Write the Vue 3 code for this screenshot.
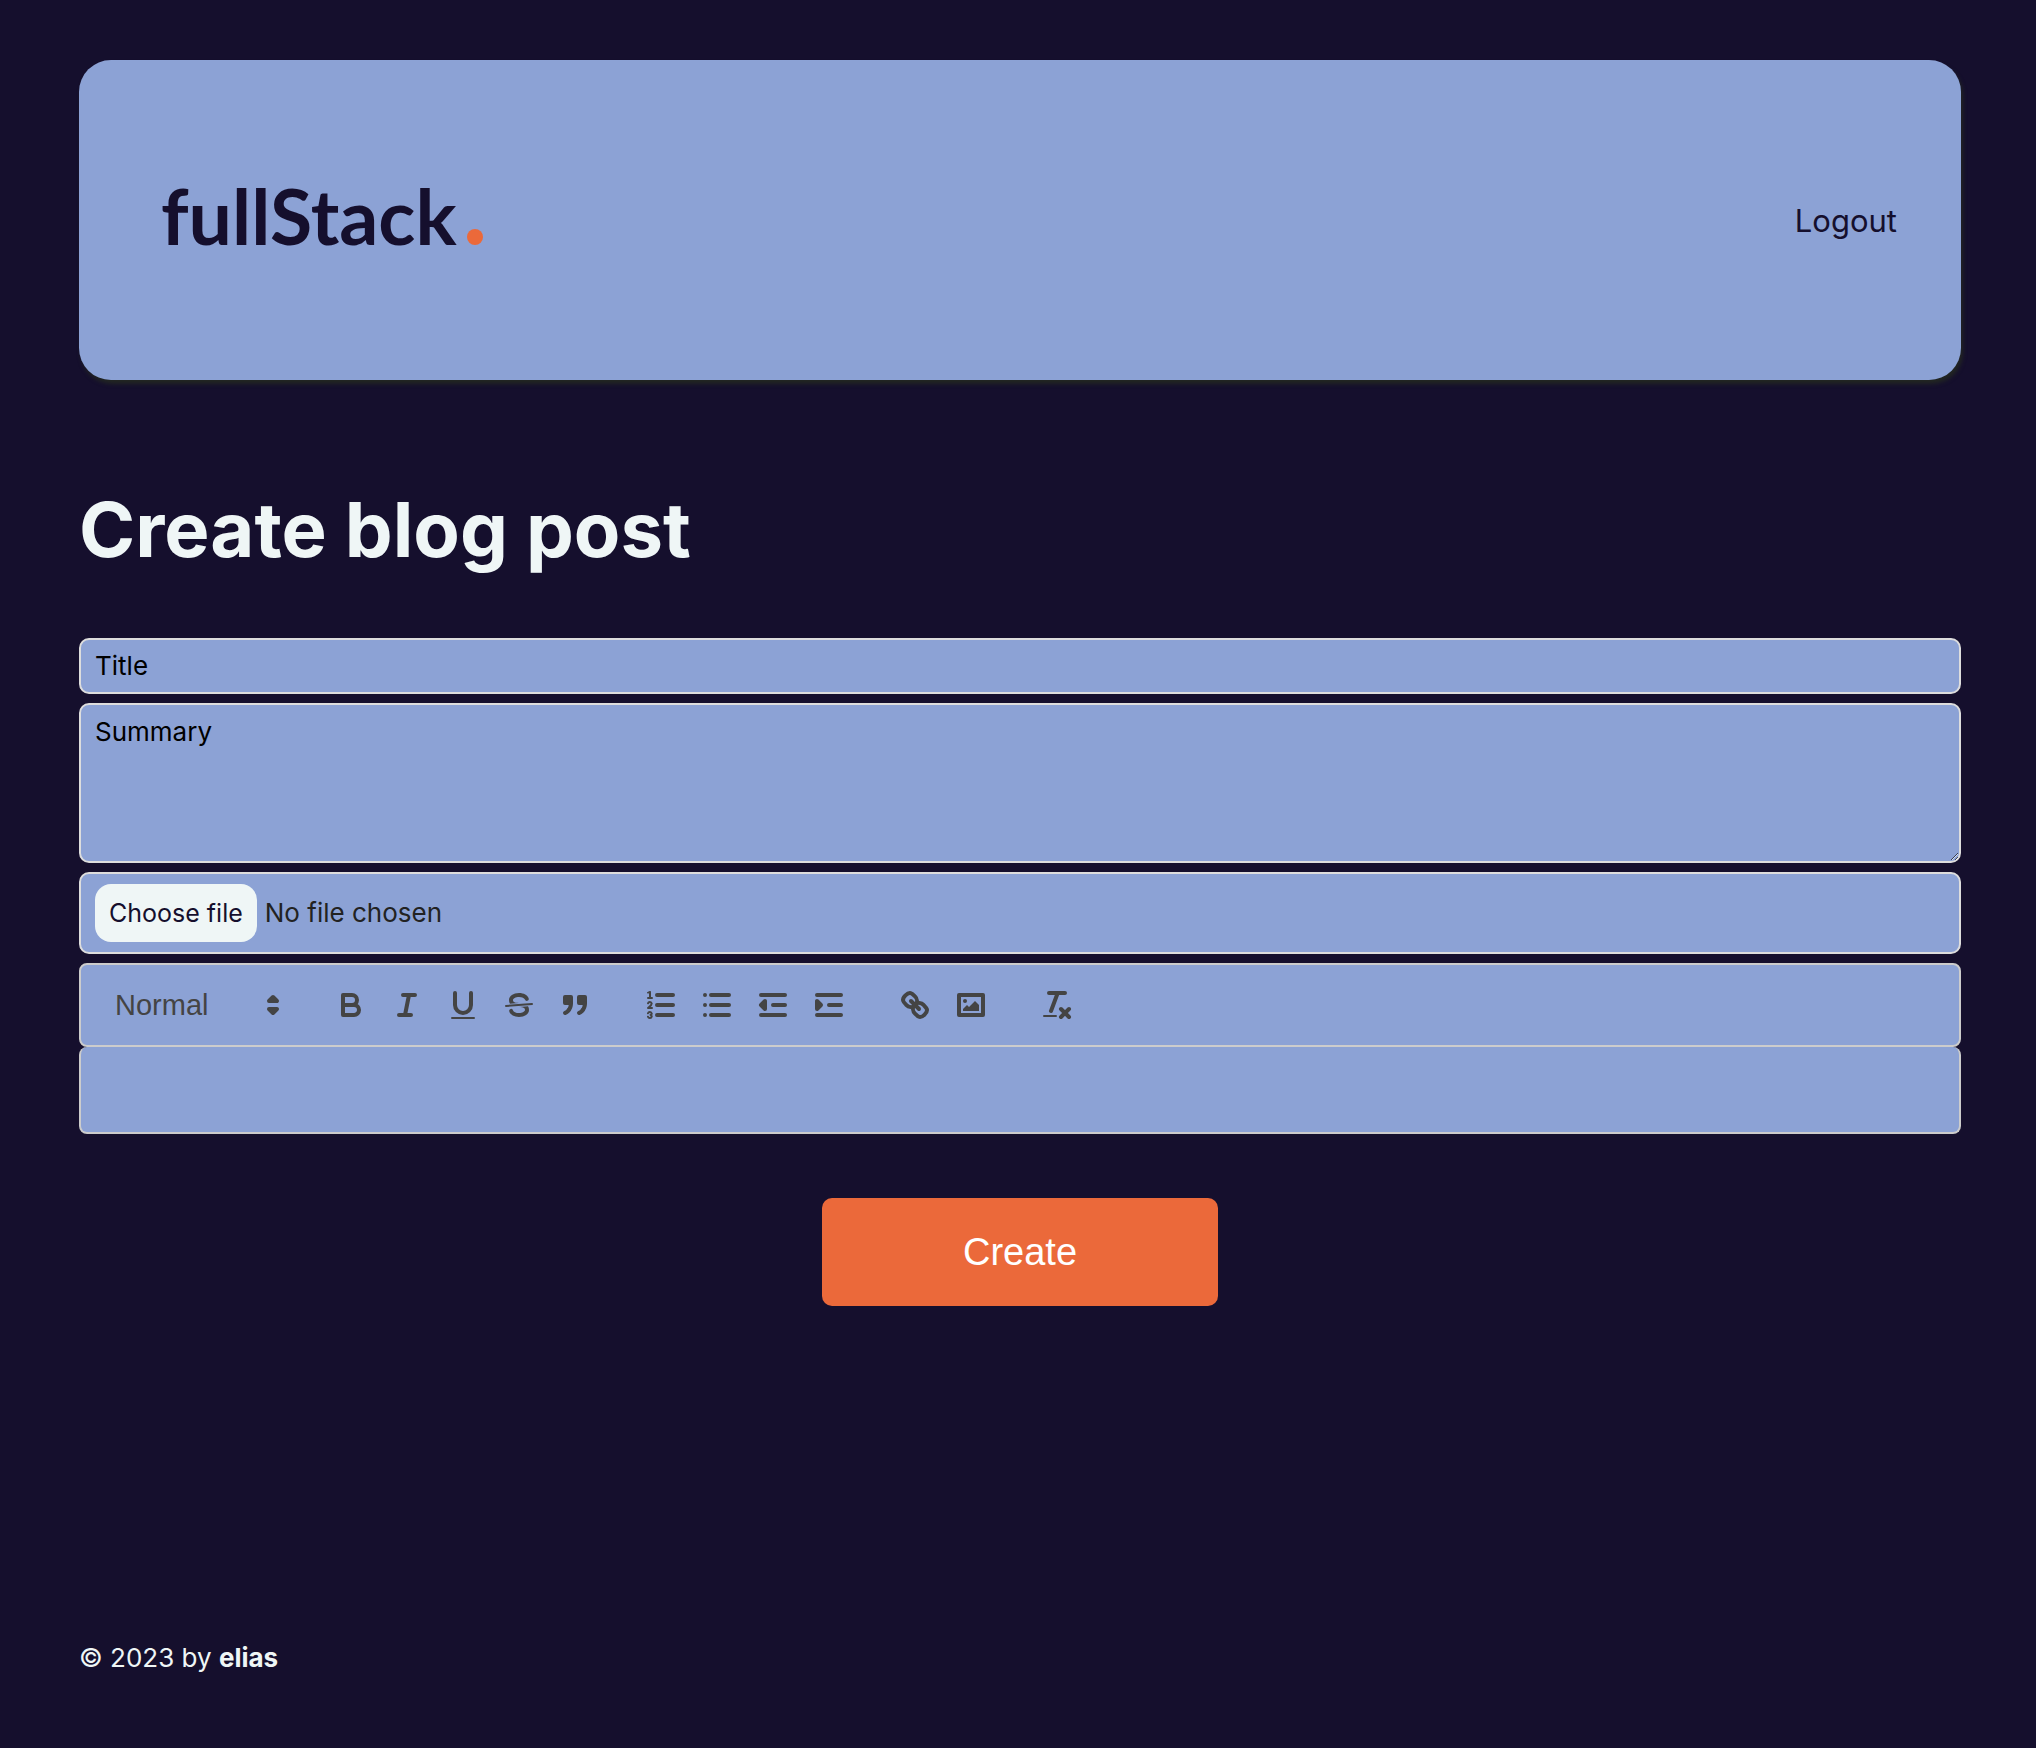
<script setup>
import { ref } from 'vue'

const title = ref('')
const summary = ref('')
const format = ref('normal')
const fileName = ref('')

const onFile = (event) => {
  fileName.value = event.target.files[0]?.name ?? ''
}

const groups = [
  [
    {
      name: 'Bold',
      svg: '<path class="s" d="M5,4H9.5A2.5,2.5,0,0,1,12,6.5v0A2.5,2.5,0,0,1,9.5,9H5V4Z"/><path class="s" d="M5,9h5.5A2.5,2.5,0,0,1,13,11.5v0A2.5,2.5,0,0,1,10.5,14H5V9Z"/>'
    },
    {
      name: 'Italic',
      svg: '<path class="s" d="M7,4H13M5,14H11M8,14L10,4"/>'
    },
    {
      name: 'Underline',
      svg: '<path class="s" d="M5,3V9a4.012,4.012,0,0,0,4,4H9a4.012,4.012,0,0,0,4-4V3"/><rect class="f" height="1" rx="0.5" ry="0.5" width="12" x="3" y="15"/>'
    },
    {
      name: 'Strike',
      svg: '<path class="s thin" d="M15.5,8.5L2.5,9.5"/><path class="f" d="M9.007,8C6.542,7.791,6,7.519,6,6.5,6,5.792,7.283,5,9,5c1.571,0,2.765.679,2.969,1.309a1,1,0,0,0,1.9-.617C13.356,4.106,11.354,3,9,3,6.2,3,4,4.538,4,6.5a3.2,3.2,0,0,0,.5,1.843Z"/><path class="f" d="M8.984,10C11.457,10.208,12,10.479,12,11.5c0,0.708-1.283,1.5-3,1.5-1.571,0-2.765-.679-2.969-1.309a1,1,0,1,0-1.9.617C4.644,13.894,6.646,15,9,15c2.8,0,5-1.538,5-3.5a3.2,3.2,0,0,0-.5-1.843Z"/>'
    },
    {
      name: 'Blockquote',
      svg: '<rect class="f s" height="3" width="3" x="4" y="5"/><rect class="f s" height="3" width="3" x="11" y="5"/><path class="f s" d="M7,8c0,4.031-3,5-3,5"/><path class="f s" d="M14,8c0,4.031-3,5-3,5"/>'
    }
  ],
  [
    {
      name: 'Ordered list',
      svg: '<path class="s" d="M7,4H15M7,9H15M7,14H15"/><path class="s thin" d="M2.5,5.5H4.5"/><path class="f" d="M3.5,6A0.5,0.5,0,0,1,3,5.5V3.085l-0.276.138A0.5,0.5,0,0,1,2.053,3c-0.124-.247-0.023-0.324.224-0.447l1-.5A0.5,0.5,0,0,1,4,2.5v3A0.5,0.5,0,0,1,3.5,6Z"/><path class="s thin" d="M4.5,10.5h-2c0-.234,1.85-1.076,1.85-2.234A0.959,0.959,0,0,0,2.5,8.156"/><path class="s thin" d="M2.5,14.846a0.959,0.959,0,0,0,1.85-.109A0.7,0.7,0,0,0,3.75,14a0.688,0.688,0,0,0,.6-0.736,0.959,0.959,0,0,0-1.85-.109"/>'
    },
    {
      name: 'Bullet list',
      svg: '<path class="s" d="M6,4H15M6,9H15M6,14H15M3,4H3M3,9H3M3,14H3"/>'
    },
    {
      name: 'Decrease indent',
      svg: '<path class="s" d="M3,14H15M3,4H15M9,9H15"/><path class="f s" d="M5,7V11L3,9Z"/>'
    },
    {
      name: 'Increase indent',
      svg: '<path class="s" d="M3,14H15M3,4H15M9,9H15"/><path class="f s" d="M3,7V11L5,9Z"/>'
    }
  ],
  [
    {
      name: 'Link',
      svg: '<path class="s" d="M7,7L11,11"/><path class="s" d="M8.9,4.577a3.476,3.476,0,0,1,.36,4.679A3.476,3.476,0,0,1,4.577,8.9C3.185,7.5,2.035,6.4,4.217,4.217S7.5,3.185,8.9,4.577Z"/><path class="s" d="M13.423,9.1a3.476,3.476,0,0,0-4.679-.36,3.476,3.476,0,0,0,.36,4.679c1.392,1.392,2.5,2.542,4.679.36S14.815,10.5,13.423,9.1Z"/>'
    },
    {
      name: 'Image',
      svg: '<rect class="s" height="10" width="12" x="3" y="4"/><circle class="f" cx="6" cy="7" r="1"/><path class="f" d="M5,12V11L7,9L8,10L11,7L13,9V12Z"/>'
    }
  ],
  [
    {
      name: 'Clear formatting',
      svg: '<path class="s" d="M5,3H13M6,12L9.35,3M11,11L15,15M15,11L11,15"/><rect class="f" height="1" rx="0.5" ry="0.5" width="7" x="2" y="14"/>'
    }
  ]
]
</script>

<template>
  <div class="page">
    <header class="banner">
      <a class="logo" href="#">fullStack<span class="dot"></span></a>
      <nav><a class="logout" href="#">Logout</a></nav>
    </header>

    <main>
      <h1>Create blog post</h1>
      <form class="form" @submit.prevent>
        <input v-model="title" class="field" type="text" placeholder="Title" aria-label="Title" />
        <textarea v-model="summary" class="field summary" placeholder="Summary" aria-label="Summary"></textarea>
        <div class="field file">
          <input id="cover" class="file-input" type="file" @change="onFile" />
          <label for="cover" class="file-button">Choose file</label>
          <span class="file-name">{{ fileName || 'No file chosen' }}</span>
        </div>
        <div class="editor">
          <div class="toolbar">
            <div class="picker">
              <select v-model="format" aria-label="Text style">
                <option value="1">Heading 1</option>
                <option value="2">Heading 2</option>
                <option value="normal">Normal</option>
              </select>
              <svg class="icon arrows" viewBox="0 0 18 18" aria-hidden="true">
                <path class="f s" d="M7,11L9,13L11,11Z" />
                <path class="f s" d="M7,7L9,5L11,7Z" />
              </svg>
            </div>
            <div v-for="(group, i) in groups" :key="i" class="group">
              <button v-for="tool in group" :key="tool.name" type="button" class="tool" :aria-label="tool.name">
                <svg class="icon" viewBox="0 0 18 18" aria-hidden="true" v-html="tool.svg"></svg>
              </button>
            </div>
          </div>
          <div class="content" contenteditable="true" role="textbox" aria-label="Post content"></div>
        </div>
        <button class="submit" type="submit">Create</button>
      </form>
    </main>

    <footer>© 2023 by <strong>elias</strong></footer>
  </div>
</template>

<style>
body {
  margin: 0;
  background: #150f2d;
}
</style>

<style scoped>
.page {
  box-sizing: border-box;
  min-height: 100vh;
  display: flex;
  flex-direction: column;
  padding: 60px 75px 72px 79px;
  background: #150f2d;
  color: #eff6f6;
  font-family: Inter, sans-serif;
  font-size: 26px;
  line-height: 36px;
}

.banner {
  display: flex;
  align-items: center;
  justify-content: space-between;
  padding: 107px 64px 117px 82px;
  border-radius: 32px;
  background: #8ca2d5;
  box-shadow: 2px 4px 4px #222622;
}

.logo {
  display: flex;
  align-items: baseline;
  gap: 10px;
  color: #150f2d;
  font-family: Lato, sans-serif;
  font-size: 77px;
  font-weight: 700;
  line-height: 96px;
  text-decoration: none;
}

.dot {
  width: 16px;
  height: 16px;
  border-radius: 50%;
  background: #eb693a;
}

nav {
  padding-top: 14px;
}

.logout {
  color: #150f2d;
  font-size: 31px;
  text-decoration: none;
}

h1 {
  margin: 100px 0 60px;
  font-size: 76px;
  font-weight: 700;
  line-height: 98px;
}

.form {
  display: flex;
  flex-direction: column;
  gap: 9px;
}

.field {
  box-sizing: border-box;
  width: 100%;
  margin: 0;
  padding: 8px 14px;
  border: 2px solid #ddd;
  border-radius: 10px;
  outline: none;
  background: #8ca2d5;
  color: #000;
  font: inherit;
}

.field::placeholder {
  color: #000;
  opacity: 1;
}

.summary {
  display: block;
  height: 160px;
  padding-top: 9px;
}

.file {
  display: flex;
  align-items: center;
  gap: 8px;
  padding: 10px 14px;
}

.file-input {
  position: absolute;
  width: 1px;
  height: 1px;
  opacity: 0;
}

.file-button {
  padding: 11px 14px;
  border-radius: 16px;
  background: #eff6f6;
  color: #150f2d;
  font-size: 25px;
}

.file-name {
  color: #222;
}

.toolbar {
  display: flex;
  flex-wrap: wrap;
  gap: 30px;
  padding: 16px;
  border: 2px solid #ccc;
  border-radius: 8px;
  background: #8ca2d5;
}

.picker {
  position: relative;
  width: 196px;
  height: 48px;
}

.picker select {
  width: 100%;
  height: 100%;
  margin: 0;
  padding: 0 18px;
  border: 0;
  appearance: none;
  background: transparent;
  color: #444;
  font-family: "Liberation Sans", sans-serif;
  font-size: 29px;
  font-weight: 500;
}

.arrows {
  position: absolute;
  top: 6px;
  right: 2px;
  pointer-events: none;
}

.group {
  display: flex;
}

.tool {
  width: 56px;
  height: 48px;
  padding: 6px 10px;
  border: 0;
  background: none;
}

.icon {
  display: block;
  width: 36px;
  height: 36px;
}

.icon :deep(.s),
.arrows .s {
  fill: none;
  stroke: #444;
  stroke-width: 2;
  stroke-linecap: round;
  stroke-linejoin: round;
}

.icon :deep(.thin) {
  stroke-width: 1;
}

.icon :deep(.f),
.arrows .f {
  fill: #444;
}

.content {
  min-height: 85px;
  border: 2px solid #ccc;
  border-top: 0;
  border-radius: 8px;
  outline: none;
  background: #8ca2d5;
}

.submit {
  align-self: center;
  width: 21%;
  margin-top: 55px;
  padding: 32px;
  border: 0;
  border-radius: 10px;
  background: #eb693a;
  color: #fff;
  font-family: "Liberation Sans", sans-serif;
  font-size: 38px;
  line-height: 44px;
}

footer {
  margin-top: auto;
}
</style>
